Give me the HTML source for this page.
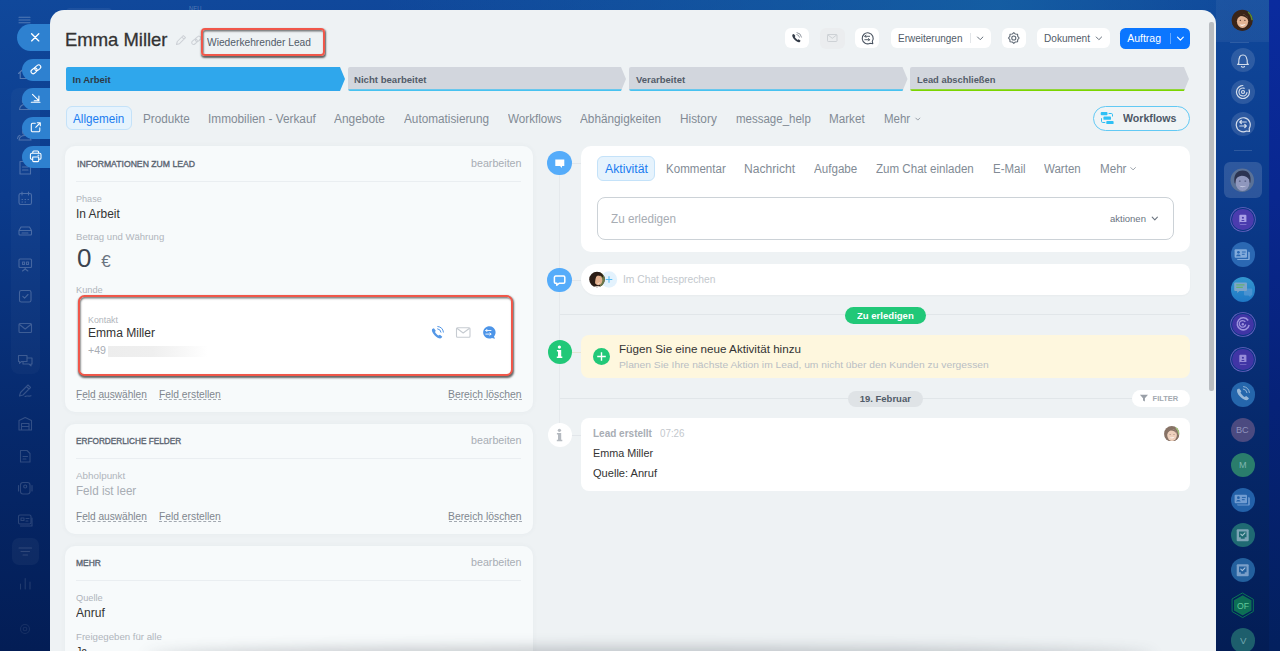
<!DOCTYPE html>
<html lang="de"><head><meta charset="utf-8"><title>Lead - Emma Miller</title>
<style>
*{box-sizing:border-box;margin:0;padding:0}
html,body{width:1280px;height:651px;overflow:hidden}
body{position:relative;font-family:"Liberation Sans",sans-serif;background:linear-gradient(180deg,#10489b 0%,#0b3b8c 30%,#06296c 65%,#031d55 100%)}
.abs,.t,svg.i{position:absolute}
.t{white-space:pre;line-height:1;transform-origin:0 50%}
.topband{left:0;top:0;width:1280px;height:40px;background:linear-gradient(90deg,rgba(20,96,165,0) 0%,rgba(20,96,165,0) 30%,rgba(22,100,165,.75) 78%,rgba(20,96,165,.1) 96%)}
.rstrip{left:1269px;top:0;width:11px;height:651px;background:linear-gradient(180deg,#0a2b9e 0%,#09278f 30%,#062278 62%,#03205e 100%)}
.rhead{left:1216px;top:0;width:53px;height:42px;background:rgba(255,255,255,.05)}
.panel{left:50px;top:10px;width:1166px;height:700px;background:#eef2f4;border-radius:14px 14px 0 0}
.scroll{left:1209px;top:22px;width:4.5px;height:369px;background:#b9bdc1;border-radius:2px}
.pill{background:#2e81d0;border-radius:12px 0 0 12px}
.card{background:#f7fafb;border-radius:10px;box-shadow:0 0 5px rgba(80,95,110,.055)}
.wcard{background:#fff;border-radius:10px}
.hr{height:1px;background:#eaeef1}
.btn{background:#fff;border-radius:6px;top:28px;height:20px}
.circ{border-radius:50%}
.dash{border-bottom:1px dashed #a3a9b1;height:1px}
.pc{left:1232px;width:21.500px;height:21.500px;background:#4a3cae;box-shadow:0 0 0 .9px #0b3585,0 0 0 1.700px #6c65c4}
.rc{border-radius:50%;background:rgba(255,255,255,.13);width:24px;height:24px;left:1231px}
</style></head><body>
<div class="abs topband"></div>
<div class="abs rstrip"></div>
<div class="abs rhead"></div>
<div class="abs" style="left:66px;top:7.500px;width:46px;height:10px;border-radius:4px;background:rgba(255,255,255,.06)"></div>
<!-- left sidebar -->
<div class="abs" style="left:11px;top:88px;width:29px;height:286px;border-radius:8px;background:rgba(255,255,255,.028)"></div>
<div class="abs" style="left:12px;top:538px;width:27px;height:27px;border-radius:7px;background:rgba(255,255,255,.042)"></div>
<svg class="i" style="left:0;top:0" width="50" height="651" viewBox="0 0 50 651" fill="none" stroke="#fff" stroke-width="1.1" stroke-linecap="round" stroke-linejoin="round">
 <g opacity=".28"><path d="M19 17.2h11M19 20h11M19 22.700h11"/></g>
 <g opacity=".3"><path d="M18.500 73.500l6-5.500 6 5.500M20.200 72.500v6h8.600v-6"/></g>
 <g opacity=".26"><circle cx="25" cy="101" r="2.6"/><path d="M19.5 109.5c.5-3.5 2.5-5 5.500-5s5 1.500 5.500 5z"/></g>
 <g opacity=".26"><circle cx="25" cy="132" r="2.400"/><path d="M19 140c.5-3.200 2.500-4.500 6-4.500s5.500 1.300 6 4.500zM17.500 138.500c.2-1.800 1-2.800 2.500-3.200M32.500 138.500c-.2-1.800-1-2.800-2.500-3.200"/></g>
 <g opacity=".25"><path d="M20 161.500h7.500l3 3v9.500h-10.500zM22.500 167h5.500M22.500 170h5.500"/></g>
 <g opacity=".24"><rect x="19" y="193.500" width="12.500" height="11" rx="1.800"/><path d="M22 192v3M28.500 192v3M22 199.500h.5M25 199.500h.5M28 199.500h.5M22 202h.5M25 202h.5"/></g>
 <g opacity=".24"><path d="M19 230.500l2-3.500h8.500l2 3.500v3.500a1 1 0 0 1-1 1h-10.500a1 1 0 0 1-1-1zM19 230.500h12.500M22 233h6"/></g>
 <g opacity=".22"><rect x="19" y="259" width="12.500" height="8.500" rx="1"/><path d="M22.500 262h2v2.500h-2zM26.500 262h2v2.500h-2zM25.200 267.500v1.500M22.500 271l2.700-2 2.700 2"/></g>
 <g opacity=".22"><rect x="19.500" y="290.500" width="11.500" height="11.500" rx="1.800"/><path d="M22.800 296.300l1.800 1.800 3.400-3.600"/></g>
 <g opacity=".2"><rect x="19" y="323.500" width="12.500" height="9" rx="1"/><path d="M19.500 324.500l5.700 4.500 5.700-4.500"/></g>
 <g opacity=".2"><path d="M18.500 355.500h8.500v6h-5.500l-2 1.800v-1.800h-1zM23 361.500v2.500h6l2 1.800v-1.800h1v-6h-5"/></g>
 <g opacity=".19"><path d="M19.500 396l1-3.500 7.500-7.500 2.500 2.500-7.500 7.500zM26.500 386.500l2.500 2.500M25 396.500c2-1.500 3.500.5 6-.8"/></g>
 <g opacity=".18"><path d="M19 420.500l6.200-3 6.300 3v9.500h-12.500zM21.500 430v-6.500h7.500v6.500M21.500 426.500h7.500"/></g>
 <g opacity=".17"><path d="M20.500 450.500h6.500l3 3v8.500h-9.500zM23 456.500h4.500M23 459h3"/></g>
 <g opacity=".16"><rect x="20.500" y="482.500" width="9.500" height="11.500" rx="2.500"/><circle cx="25.200" cy="486.500" r="1.500"/><path d="M18.500 485.500v5.500M32 485.500v5.500"/></g>
 <g opacity=".15"><rect x="18.500" y="515" width="12.500" height="9" rx="1.500"/><path d="M21 518h3v2.500h-3zM26 518.500h3M26 521h2M20.500 526h11.500v-8"/></g>
 <g opacity=".14"><path d="M19 548h12.500M21 551.500h8.500M23 555h4.500"/></g>
 <g opacity=".12"><path d="M20.500 589v-5M25.200 589v-10.500M30 589v-7"/></g>
 <g opacity=".08"><circle cx="25" cy="629" r="4.500"/><circle cx="25" cy="629" r="1.800"/></g>
</svg>
<div class="abs pill" style="left:17px;top:24px;width:60px;height:27px;border-radius:13.500px 0 0 13.500px"></div>
<div class="abs pill" style="left:22px;top:59px;width:60px;height:21.500px"></div>
<div class="abs pill" style="left:22px;top:88px;width:60px;height:21.500px"></div>
<div class="abs pill" style="left:22px;top:117px;width:60px;height:21.500px"></div>
<div class="abs pill" style="left:22px;top:146px;width:60px;height:21.500px"></div>
<svg class="i" style="left:0;top:0" width="60" height="180" viewBox="0 0 60 180" fill="none" stroke="#fff" stroke-width="1.080" stroke-linecap="round" stroke-linejoin="round">
 <path d="M31.600 33.700l7.200 7.200M38.800 33.700l-7.200 7.200" stroke-width="1.350"/>
 <g transform="translate(35.900 69.300) rotate(-40)"><rect x="-5.700" y="-2.100" width="6.600" height="4.200" rx="2.100"/><rect x="-0.900" y="-2.100" width="6.600" height="4.200" rx="2.100"/></g>
 <path d="M32.500 94.300l6.300 6.300M38.900 96v4.700h-4.700M31.300 102.300h8.700"/>
 <path d="M39.800 127.800v2.600a1.400 1.400 0 0 1-1.400 1.400h-5.700a1.400 1.400 0 0 1-1.400-1.400v-5.700a1.400 1.400 0 0 1 1.400-1.400h2.600M37.300 122.700h3v3M40 123l-4.300 4.300"/>
 <path d="M32.800 153.300v-1.300a1 1 0 0 1 1-1h3.800a1 1 0 0 1 1 1v1.300M32.600 159.300h-.9a1.300 1.300 0 0 1-1.300-1.300v-3.300a1.400 1.400 0 0 1 1.400-1.400h7.800a1.400 1.400 0 0 1 1.400 1.400v3.300a1.300 1.300 0 0 1-1.300 1.300h-.9M32.700 157h6v3.700a.9.900 0 0 1-.9.900h-4.200a.9.900 0 0 1-.9-.9zM38 155.300h.8"/>
</svg>

<!-- right sidebar -->
<div class="abs" style="left:1230px;top:42px;width:19px;height:1px;background:rgba(255,255,255,.13)"></div>
<div class="abs" style="left:1234px;top:150px;width:18px;height:1px;background:rgba(255,255,255,.14)"></div>
<!-- user avatar -->
<svg class="i" style="left:1231.200px;top:9.300px" width="22.500" height="22.500" viewBox="0 0 24 24">
 <defs><clipPath id="av1"><circle cx="12" cy="12" r="11.300"/></clipPath></defs>
 <g clip-path="url(#av1)"><rect width="24" height="24" fill="#3a2418"/><rect x="18" y="0" width="6" height="12" fill="#5d8a2e"/><path d="M2 24c-2-14 1-22 10-22 8 0 11 6 10 22z" fill="#3a2418"/><ellipse cx="12.300" cy="13" rx="6" ry="7.300" fill="#e3b494"/><path d="M5.800 12c.5-5 4-7 7-6.500 3 .3 5 2.500 5.700 6-2-2.500-5-4-8-4-2.200.8-3.700 2.500-4.700 4.500z" fill="#3a2418"/><path d="M9 16.300c1.800 2.200 5 2.200 6.600-.2-2 .9-4.600 1-6.600.2z" fill="#fff"/><ellipse cx="10" cy="12" rx=".8" ry=".6" fill="#4a2e22"/><ellipse cx="14.800" cy="12" rx=".8" ry=".6" fill="#4a2e22"/></g>
</svg>
<div class="abs rc" style="top:48px"></div>
<div class="abs rc" style="top:80px"></div>
<div class="abs rc" style="top:112px"></div>
<svg class="i" style="left:1216px;top:40px" width="54" height="100" viewBox="0 0 54 100" fill="none" stroke="#fff" stroke-width="1.200" stroke-linecap="round" stroke-linejoin="round" opacity=".8">
 <path d="M22.700 23.500c0-7 1.500-8.500 4.300-8.500s4.300 1.500 4.300 8.500l1 1h-10.600zM25.500 26.500c.5 1 2.500 1 3 0"/>
 <circle cx="27" cy="52" r="6.500" stroke-dasharray="32 9" transform="rotate(-20 27 52)"/><circle cx="27" cy="52" r="4" stroke-dasharray="19 7" transform="rotate(10 27 52)"/><circle cx="27" cy="52" r="1.500"/>
 <path d="M33.200 88.500a7 7 0 1 0-2.700 2.500l3 .5zM30.300 82h-6.500M25.300 80.500l-1.500 1.500 1.500 1.500M23.800 86h6.500M28.800 84.500l1.500 1.500-1.500 1.500"/>
</svg>
<!-- selected avatar -->
<div class="abs" style="left:1223.800px;top:162px;width:38px;height:35.500px;border-radius:6px;background:rgba(255,255,255,.14)"></div>
<svg class="i" style="left:1230.300px;top:167.600px" width="24.500" height="24.500" viewBox="0 0 24 24">
 <defs><clipPath id="av2"><circle cx="12" cy="12" r="11.500"/></clipPath></defs>
 <g clip-path="url(#av2)"><rect width="24" height="24" fill="#5b7297"/><path d="M4.500 15c-1.500-8 2-12.500 8-12.500 5.500 0 8.500 4.500 7.500 12z" fill="#2c3452"/><ellipse cx="12.300" cy="14" rx="6.800" ry="8.600" fill="#8f97bd"/><path d="M5.500 11.500c.3-5 3.500-7 7-6.800 3.500.2 6 2.500 6.500 6.800-1.800-2.600-4.300-3.800-7.500-3.800-2.800.3-4.800 1.500-6 3.800z" fill="#2c3452"/><path d="M9 17.500c1.800 1.800 5 1.800 6.600-.1-2 .7-4.600.8-6.600.1z" fill="#c9cfe6"/><ellipse cx="9.600" cy="12.800" rx="1" ry=".6" fill="#4a5278"/><ellipse cx="15" cy="12.800" rx="1" ry=".6" fill="#4a5278"/></g>
</svg>
<!-- app circles -->
<div class="abs circ pc" style="top:208.700px"></div>
<div class="abs circ" style="left:1230.500px;top:242.200px;width:24.500px;height:24.500px;background:#2b68b3"></div>
<div class="abs circ" style="left:1230.500px;top:277.400px;width:24.500px;height:24.500px;background:linear-gradient(180deg,#3397cf,#1f78c6)"></div>
<div class="abs circ pc" style="top:313.600px;background:#4035a5"></div>
<div class="abs circ pc" style="top:348.600px;background:#4035a5"></div>
<div class="abs circ" style="left:1230.500px;top:382.200px;width:24.500px;height:24.500px;background:#2566ac"></div>
<div class="abs circ" style="left:1230.500px;top:417.800px;width:24.500px;height:24.500px;background:#4b4a80"></div>
<div class="abs circ" style="left:1230.500px;top:452.700px;width:24.500px;height:24.500px;background:#2a7d6c"></div>
<div class="abs circ" style="left:1230.500px;top:487.700px;width:24.500px;height:24.500px;background:#2361a9"></div>
<div class="abs circ" style="left:1230.500px;top:522.600px;width:24.500px;height:24.500px;background:#1f6a73"></div>
<div class="abs circ" style="left:1230.500px;top:557.600px;width:24.500px;height:24.500px;background:#23609e"></div>
<div class="abs circ" style="left:1230.500px;top:628.300px;width:24.500px;height:24.500px;background:#1d5e6c"></div>
<svg class="i" style="left:1216px;top:200px;opacity:.88" width="54" height="451" viewBox="0 0 54 451" fill="none" stroke-linecap="round" stroke-linejoin="round">
 <!-- purple contact book -->
 <g fill="#b7aeee"><path d="M23.300 15.800a1 1 0 0 1 1-1h5.100a1 1 0 0 1 1 1v6.200h-6.100a1 1 0 0 0 0 2h6.100v.500h-6.100a1.500 1.500 0 0 1-1-1.500z"/></g><circle cx="26.900" cy="17.700" r="1.050" fill="#4a3cae"/><path d="M25.100 21c.3-1.500 3.300-1.500 3.600 0z" fill="#4a3cae"/>
 <!-- contacts card -->
 <g fill="#8fb5e2"><rect x="18.600" y="49.300" width="12.400" height="8.500" rx="1"/><path d="M32.200 51.800h.6a1 1 0 0 1 1 1v6.200a1 1 0 0 1-1 1h-10.800a1 1 0 0 1-1-1h11.200z"/></g><circle cx="22.400" cy="52.300" r="1.400" fill="#2b68b3"/><path d="M20.100 56.200c.3-2.200 4.300-2.200 4.600 0z" fill="#2b68b3"/><path d="M26.300 52h3M26.300 54.300h2" stroke="#2b68b3" stroke-width="1"/>
 <!-- chat -->
 <path d="M28 88.500h7.300a1 1 0 0 1 1 1v5a1 1 0 0 1-1 1h-.800v1.700l-2-1.700h-3.500a1 1 0 0 1-1-1z" fill="#4f95d3"/>
 <path d="M18.200 83.400a1 1 0 0 1 1-1h10.800a1 1 0 0 1 1 1v6.600a1 1 0 0 1-1 1h-6.500l-2.300 2v-2h-2a1 1 0 0 1-1-1z" fill="#88a9c9"/>
 <path d="M20.300 84.800h8.200M20.300 87.300h6.500" stroke="#6cb56a" stroke-width="1.200" stroke-linecap="butt"/>
 <!-- purple copilot -->
 <g stroke="#a9a0e6" stroke-width="1.500" stroke-linecap="butt"><path d="M32.200 120.500a6 6 0 1 0 .9 4.500"/><path d="M29.300 122a3.300 3.300 0 1 0 .5 2.500" stroke-width="1.300"/></g><circle cx="26.800" cy="124.200" r="1.200" fill="#a9a0e6"/>
 <!-- purple contact book 2 -->
 <g fill="#a399e0"><path d="M23.300 155.800a1 1 0 0 1 1-1h5.100a1 1 0 0 1 1 1v6.200h-6.100a1 1 0 0 0 0 2h6.100v.500h-6.100a1.500 1.500 0 0 1-1-1.500z"/></g><circle cx="26.900" cy="157.700" r="1.050" fill="#4035a5"/><path d="M25.100 161c.3-1.500 3.300-1.500 3.600 0z" fill="#4035a5"/>
 <!-- phone -->
 <path d="M21.300 189.200c-1 1.500.1 4.700 3 7.600s6.100 4 7.600 3l1.100-1.600-2.800-2.200-1.600.9c-1.300-.6-3.500-2.800-4.100-4.100l.9-1.600-2.200-2.800z" fill="#a8c3df"/>
 <path d="M27.300 189a4.300 4.300 0 0 1 3.700 3.700M27.500 186.600a6.800 6.800 0 0 1 5.900 5.900" stroke="#a8c3df" stroke-width="1"/>
 <!-- contacts card 2 -->
 <g fill="#7da6d8"><rect x="18.600" y="294.700" width="12.400" height="8.500" rx="1"/><path d="M32.200 297.200h.6a1 1 0 0 1 1 1v6.200a1 1 0 0 1-1 1h-10.800a1 1 0 0 1-1-1h11.200z"/></g><circle cx="22.400" cy="297.700" r="1.400" fill="#2361a9"/><path d="M20.100 301.600c.3-2.200 4.300-2.200 4.600 0z" fill="#2361a9"/><path d="M26.300 297.400h3M26.300 299.700h2" stroke="#2361a9" stroke-width="1"/>
 <!-- check boxes -->
 <path d="M20.700 330.200a1 1 0 0 1 1-1h10a1 1 0 0 1 1 1v10a1 1 0 0 1-1 1h-10a1 1 0 0 1-1-1z" fill="#8aaec0"/><path d="M23 331.500h7.500v5.700h-1.800v1.600h-3.900v-1.600h-1.800z" fill="#1f6a73"/><path d="M24.800 334.200l1.500 1.500 2.700-2.900" stroke="#b9d3dc" stroke-width="1.100"/>
 <path d="M20.700 365.200a1 1 0 0 1 1-1h10a1 1 0 0 1 1 1v10a1 1 0 0 1-1 1h-10a1 1 0 0 1-1-1z" fill="#86a8cf"/><path d="M23 366.500h7.500v5.700h-1.800v1.600h-3.900v-1.600h-1.800z" fill="#23609e"/><path d="M24.800 369.200l1.500 1.500 2.700-2.900" stroke="#b9cfe6" stroke-width="1.100"/>
 <!-- hex OF -->
 <path d="M26.700 393.200l10.600 6.100v12.200l-10.600 6.100-10.600-6.100v-12.200z" fill="none" stroke="#0c8356" stroke-width="1"/>
 <path d="M26.700 395.300l8.800 5.050v10.100l-8.800 5.050-8.800-5.050v-10.100z" fill="#0f7b55"/>
</svg>

<div class="abs panel"></div>
<div class="abs scroll"></div>
<!-- header -->
<svg class="i" style="left:174px;top:33px" width="30" height="14" viewBox="0 0 30 14" fill="none" stroke="#cdd1d6" stroke-width="1.050" stroke-linecap="round" stroke-linejoin="round">
 <path d="M2.500 11.500l.8-3 6-6 2.200 2.200-6 6zM7.800 4l2.200 2.200"/>
 <g transform="translate(22.300 7.300) rotate(-40)"><rect x="-5.400" y="-1.900" width="6.200" height="3.800" rx="1.900"/><rect x="-0.800" y="-1.900" width="6.200" height="3.800" rx="1.900"/></g>
</svg>
<div class="abs" style="left:201.300px;top:28px;width:123.700px;height:27.700px;border:2.800px solid #f0574a;border-radius:4px;box-shadow:.8px 1.600px 1.800px rgba(0,0,0,.6),inset .8px 1.500px 1.600px rgba(0,0,0,.5)"></div>
<!-- stages -->
<svg class="i" style="left:60px;top:66px" width="1140" height="27" viewBox="60 66 1140 27">
 <path d="M68 67h272l5 12-5 12h-272a2 2 0 0 1-2-2v-20a2 2 0 0 1 2-2z" fill="#2fa7ec"/>
 <path d="M350 67h271l5 12-5 12h-271a2 2 0 0 1-2-2v-20a2 2 0 0 1 2-2z" fill="#d2d6dd"/>
 <path d="M348.300 89.200h273.400l-.8 1.800h-270.900a2 2 0 0 1-1.700-1.800z" fill="#47c2f0"/>
 <path d="M631 67h271.500l5 12-5 12h-271.500a2 2 0 0 1-2-2v-20a2 2 0 0 1 2-2z" fill="#d2d6dd"/>
 <path d="M629.300 89.200h273.900l-.8 1.800h-271.400a2 2 0 0 1-1.700-1.800z" fill="#47c2f0"/>
 <path d="M912 67h272l5 12-5 12h-272a2 2 0 0 1-2-2v-20a2 2 0 0 1 2-2z" fill="#d2d6dd"/>
 <path d="M910.300 89.200h274.400l-.8 1.800h-271.900a2 2 0 0 1-1.700-1.800z" fill="#7bd500"/>
</svg>
<!-- top buttons -->
<div class="abs btn" style="left:785px;width:24px"></div>
<div class="abs btn" style="left:819.500px;width:25.500px;background:#ebedef;top:27.500px;height:21px;border-radius:6px"></div>
<div class="abs btn" style="left:855px;width:24px"></div>
<div class="abs btn" style="left:890.500px;width:100px"></div>
<div class="abs" style="left:969.500px;top:33px;width:1px;height:10px;background:#e3e6e9"></div>
<div class="abs btn" style="left:1002px;width:23.500px"></div>
<div class="abs btn" style="left:1037px;width:72.500px"></div>
<div class="abs btn" style="left:1120px;width:70px;top:27.500px;height:21.500px;background:#0b76ff;border-radius:5.500px"></div>
<div class="abs" style="left:1169.500px;top:33px;width:1px;height:10.500px;background:rgba(255,255,255,.35)"></div>
<svg class="i" style="left:780px;top:24px" width="420" height="28" viewBox="780 24 420 28" fill="none" stroke-linecap="round" stroke-linejoin="round">
 <!-- phone -->
 <g transform="translate(-.8 .3)"><path d="M793.300 34.300c-.7 1 .1 3.200 2.100 5.200s4.200 2.800 5.200 2.100l.8-1.100-1.900-1.500-1.100.6c-.9-.4-2.400-1.900-2.800-2.800l.6-1.100-1.500-1.900z" fill="#333b47"/>
 <path d="M797.600 34.200a3.200 3.200 0 0 1 2.700 2.700M797.800 32.300a5.200 5.200 0 0 1 4.500 4.500" stroke="#7a828c" stroke-width=".8"/></g>
 <!-- mail -->
 <rect x="827.500" y="34.500" width="9.500" height="7" rx=".8" stroke="#cdd1d5" stroke-width="1"/><path d="M828 35l4.300 3.300 4.300-3.300" stroke="#cdd1d5" stroke-width="1"/>
 <!-- chat -->
 <path d="M872.300 41.300a5.500 5.500 0 1 0-2.100 1.900l2.600.5z" stroke="#4a5461" stroke-width="1.100"/>
 <path d="M869.600 36.300h-4.800M866 35.100l-1.200 1.200 1.200 1.200M864.800 39.700h4.800M868.400 38.500l1.200 1.200-1.200 1.200" stroke="#4a5461" stroke-width=".95"/>
 <!-- chevrons -->
 <path d="M977.500 37l2.700 2.700 2.700-2.700" stroke="#66707c" stroke-width="1"/>
 <path d="M1096.200 37l2.700 2.700 2.700-2.700" stroke="#66707c" stroke-width="1"/>
 <path d="M1177.500 37.200l2.900 2.900 2.900-2.900" stroke="#fff" stroke-width="1.200"/>
 <!-- gear -->
 <g stroke="#5e6874" stroke-width="1.080" stroke-linejoin="round"><circle cx="1013.8" cy="38" r="2.050"/><path d="M1013.80 32.65L1015.43 34.07L1017.58 34.22L1017.73 36.37L1019.15 38.00L1017.73 39.63L1017.58 41.78L1015.43 41.93L1013.80 43.35L1012.17 41.93L1010.02 41.78L1009.87 39.63L1008.45 38.00L1009.87 36.37L1010.02 34.22L1012.17 34.07z"/></g>
</svg>
<!-- tabs -->
<div class="abs" style="left:65.500px;top:106px;width:66px;height:24px;border-radius:6px;background:#e6f3fd;border:1px solid #c4e2f9"></div>
<svg class="i" style="left:914px;top:115px" width="8" height="8" viewBox="0 0 8 8" fill="none" stroke="#9aa1a9" stroke-width="1"><path d="M1.500 2.800l2.300 2.300 2.300-2.300"/></svg>
<!-- workflows button -->
<div class="abs" style="left:1093px;top:106px;width:97px;height:24.500px;border-radius:12.500px;border:1px solid #62c9f4;background:#f0f4f6"></div>
<svg class="i" style="left:1098px;top:109px" width="20" height="18" viewBox="1098 109 20 18">
 <rect x="1100.700" y="112.100" width="6.800" height="3.100" rx=".9" fill="#2fc0f5"/><rect x="1103.400" y="116.600" width="7.600" height="3.200" rx=".9" fill="#2fc0f5"/><rect x="1106.300" y="120.900" width="7.300" height="3.200" rx=".9" fill="#2fc0f5"/>
 <path d="M1109 113.500h2.300a1.200 1.200 0 0 1 1.200 1.200v1.400M1101.500 118.600v2.700a1.200 1.200 0 0 0 1.200 1.200h2.200" fill="none" stroke="#2fc0f5" stroke-width="1" stroke-linecap="round"/>
</svg>

<!-- left column cards -->
<div class="abs card" style="left:65px;top:146px;width:468px;height:266px"></div>
<div class="abs card" style="left:65px;top:424px;width:468px;height:110px"></div>
<div class="abs card" style="left:65px;top:545.500px;width:468px;height:140px"></div>
<div class="abs hr" style="left:76px;top:180.500px;width:445px"></div>
<div class="abs hr" style="left:76px;top:457.500px;width:445px"></div>
<div class="abs hr" style="left:76px;top:579.500px;width:445px"></div>
<!-- contact red box -->
<div class="abs" style="left:77.500px;top:295px;width:435px;height:81px;background:#fff;border:2.800px solid #f0574a;border-radius:6.500px;box-shadow:.6px 1.800px 2px rgba(0,0,0,.6),inset .8px 1.500px 1.800px rgba(0,0,0,.5)"></div>
<div class="abs" style="left:108px;top:345.500px;width:100px;height:11.500px;background:linear-gradient(90deg,#ededed 0%,#efefef 45%,rgba(242,242,242,.6) 75%,rgba(255,255,255,0) 100%)"></div>
<svg class="i" style="left:428px;top:322px" width="72" height="20" viewBox="428 322 72 20" fill="none" stroke-linecap="round" stroke-linejoin="round">
 <path d="M432.200 329c-.9 1.300.1 4 2.600 6.500s5.200 3.500 6.500 2.600l1-1.400-2.400-1.900-1.400.8c-1.100-.5-3-2.400-3.500-3.500l.8-1.400-1.900-2.400z" fill="#5497e6"/>
 <path d="M437.600 328.800a4 4 0 0 1 3.400 3.400M437.800 326.500a6.300 6.300 0 0 1 5.600 5.600" stroke="#5497e6" stroke-width="1"/>
 <rect x="456.500" y="327.800" width="13.500" height="9.400" rx="1" stroke="#c6cbd1" stroke-width="1.100"/><path d="M457.200 328.500l6 4.500 6-4.500" stroke="#c6cbd1" stroke-width="1.100"/>
 <path d="M494 336.500a6.200 6.200 0 1 0-2 1.500l3 .8z" fill="#4d95e8"/>
 <path d="M491 330.500h-5.200M487 329.300l-1.200 1.200 1.200 1.200M485.800 334.100h5.200M489.800 332.900l1.200 1.200-1.200 1.200" stroke="#fff" stroke-width=".9"/>
</svg>
<!-- dashed underlines -->
<div class="abs dash" style="left:76.500px;top:399px;width:70.500px"></div>
<div class="abs dash" style="left:158.500px;top:399px;width:62px"></div>
<div class="abs dash" style="left:448.500px;top:399px;width:73.500px"></div>
<div class="abs dash" style="left:76.500px;top:521px;width:70.500px"></div>
<div class="abs dash" style="left:158.500px;top:521px;width:62px"></div>
<div class="abs dash" style="left:448.500px;top:521px;width:73.500px"></div>

<!-- timeline -->
<div class="abs" style="left:559px;top:170px;width:1px;height:256px;background:#e5e9ec"></div>
<div class="abs" style="left:571px;top:162.500px;width:10px;height:1px;background:#e2e6ea"></div>
<div class="abs" style="left:571px;top:279.500px;width:10px;height:1px;background:#e2e6ea"></div>
<div class="abs" style="left:571px;top:351.500px;width:10px;height:1px;background:#e6e3d3"></div>
<div class="abs" style="left:571px;top:434.500px;width:10px;height:1px;background:#e2e6ea"></div>
<div class="abs" style="left:560px;top:314px;width:630px;height:1px;background:#e1e6e9"></div>
<div class="abs" style="left:560px;top:398px;width:630px;height:1px;background:#e1e6e9"></div>
<!-- cards -->
<div class="abs wcard" style="left:581px;top:146px;width:609px;height:106px"></div>
<div class="abs" style="left:597px;top:156px;width:58px;height:24.500px;border-radius:6px;background:#e6f3fd;border:1px solid #c4e2f9"></div>
<div class="abs" style="left:597px;top:197px;width:577px;height:42.500px;border-radius:8px;border:1px solid #ccd2d7;background:#fff"></div>
<svg class="i" style="left:1128px;top:165px" width="34" height="60" viewBox="1128 165 34 60" fill="none" stroke-linecap="round" stroke-linejoin="round"><path d="M1130.800 167.600l2.300 2.300 2.300-2.300" stroke="#9aa1a9" stroke-width="1"/><path d="M1152.200 217.200l2.600 2.600 2.600-2.600" stroke="#6a737f" stroke-width="1.100"/></svg>
<div class="abs" style="left:581px;top:264px;width:609px;height:31px;border-radius:15.500px 8px 8px 15.500px;background:#fff;box-shadow:0 1px 2px rgba(0,0,0,.03)"></div>
<div class="abs" style="left:581px;top:335px;width:609px;height:43px;border-radius:8px;background:#fef7de"></div>
<div class="abs wcard" style="left:581px;top:418px;width:609px;height:72.500px;border-radius:8px"></div>
<!-- pills -->
<div class="abs" style="left:845px;top:307px;width:80.500px;height:16.500px;border-radius:8.500px;background:#21c878"></div>
<div class="abs" style="left:848px;top:390.500px;width:74.500px;height:16px;border-radius:8px;background:#dfe3e6"></div>
<div class="abs" style="left:1132px;top:390px;width:58px;height:16.500px;border-radius:8.500px;background:#fff"></div>
<svg class="i" style="left:1139px;top:394px" width="10" height="9" viewBox="0 0 10 9"><path d="M.9.800h8.100l-3.100 3.400v3.300l-1.900-.9v-2.400z" fill="#9aa0a8"/></svg>
<!-- circles -->
<div class="abs circ" style="left:547.400px;top:151px;width:24.300px;height:24.300px;background:#55acfa"></div>
<div class="abs circ" style="left:547.400px;top:267.800px;width:24.300px;height:24.300px;background:#55acfa"></div>
<div class="abs circ" style="left:547.500px;top:339.500px;width:24.500px;height:24.500px;background:#21c878"></div>
<div class="abs circ" style="left:547.500px;top:422.500px;width:24.500px;height:24.500px;background:#fff"></div>
<svg class="i" style="left:547px;top:150px" width="26" height="300" viewBox="547 150 26 300" fill="none" stroke-linecap="round" stroke-linejoin="round">
 <path d="M555.300 159.500h9v6.500h-2.300v1.900l-2-1.900h-4.700z" fill="#fff"/>
 <g fill="#fff"><circle cx="559.400" cy="347.100" r="1.650"/><path d="M556.900 349.900h4.300v6.700h1.100v1.500h-5.500v-1.500h1.200v-5.200h-1.100z"/></g>
 <g fill="#b5bac0" transform="translate(0 83.200)"><circle cx="559.400" cy="347.100" r="1.650"/><path d="M556.900 349.900h4.300v6.700h1.100v1.500h-5.500v-1.500h1.200v-5.200h-1.100z"/></g>
 <path d="M554.400 277.300a1.200 1.200 0 0 1 1.200-1.200h8a1.200 1.200 0 0 1 1.200 1.200v4.800a1.200 1.200 0 0 1-1.200 1.200h-4.500l-2.300 2v-2h-1.200a1.200 1.200 0 0 1-1.200-1.200z" stroke="#fff" stroke-width="1.500"/>
</svg>
<!-- chat row avatar -->
<svg class="i" style="left:589px;top:271px" width="30" height="17" viewBox="0 0 30 17">
 <circle cx="20" cy="8.500" r="8.200" fill="#e3f2fd"/><path d="M20 5.200v6.600M16.700 8.500h6.600" stroke="#55bdf5" stroke-width="1.100" fill="none"/>
 <defs><clipPath id="av3"><circle cx="8" cy="8.500" r="7.800"/></clipPath></defs>
 <g clip-path="url(#av3)"><rect width="17" height="17" fill="#2b1d16"/><rect x="11" y="0" width="6" height="17" fill="#6b7a4a"/><ellipse cx="9.300" cy="9.300" rx="4" ry="4.900" fill="#e2b08f"/><path d="M3 13c-1-7 1.500-11.500 6-11.500 3.500 0 5.500 2 5.200 5.500-1.800-2.500-4.200-3-6-2.500-1.800 1.500-2 5-2.200 9z" fill="#2b1d16"/><path d="M7.800 11.800c1 1 2.600 1 3.400-.2-1 .5-2.300.6-3.400.2z" fill="#fff"/><ellipse cx="9" cy="18.500" rx="7" ry="3.500" fill="#d9cfc8"/></g>
</svg>
<!-- green plus -->
<div class="abs circ" style="left:593px;top:348px;width:17px;height:17px;background:#21c878"></div>
<svg class="i" style="left:593px;top:348px" width="17" height="17" viewBox="0 0 17 17"><path d="M8.500 4.200v8.600M4.200 8.500h8.600" stroke="#fff" stroke-width="1.400" fill="none"/></svg>
<!-- author avatar -->
<svg class="i" style="left:1164px;top:425.600px;opacity:.72" width="15.500" height="15.500" viewBox="0 0 16 16">
 <defs><clipPath id="av4"><circle cx="8" cy="8" r="7.900"/></clipPath></defs>
 <g clip-path="url(#av4)"><rect width="16" height="16" fill="#5a3d2c"/><rect x="12" y="0" width="4" height="9" fill="#7fae4a"/><path d="M1 16c-1.500-9 1-14.500 7-14.500 5.500 0 7.500 4 7 14.500z" fill="#5a3d2c"/><ellipse cx="8.300" cy="9.300" rx="5" ry="6.200" fill="#e8bfa3"/><path d="M3 8.500c.2-4.200 2.800-5.800 5.600-5.500 2.500.2 4.200 2 4.700 5-1.600-2-3.800-3.300-6.300-3.300-1.800.7-3.100 2-4 3.800z" fill="#5a3d2c"/><path d="M5.800 11.500c1.400 1.700 3.800 1.700 5-.1-1.500.6-3.500.7-5 .1z" fill="#fff"/><ellipse cx="6.300" cy="8.700" rx=".7" ry=".5" fill="#6b4a3a"/><ellipse cx="10.300" cy="8.700" rx=".7" ry=".5" fill="#6b4a3a"/></g>
</svg>

<span class="t" style="left:65.00px;top:30.01px;font-size:19px;color:#333;transform:scaleX(0.9710);-webkit-text-stroke:.3px #333;">Emma Miller</span>
<span class="t" style="left:207.00px;top:36.85px;font-size:11px;color:#525c69;transform:scaleX(0.9293);">Wiederkehrender Lead</span>
<span class="t" style="left:189.00px;top:6.44px;font-size:6.5px;color:rgba(255,255,255,.28);transform:scaleX(0.9101);">NEU</span>
<span class="t" style="left:72.50px;top:75.38px;font-size:9.5px;color:#2c3a47;font-weight:700;">In Arbeit</span>
<span class="t" style="left:354.00px;top:75.38px;font-size:9.5px;color:#525c69;font-weight:700;transform:scaleX(1.0098);">Nicht bearbeitet</span>
<span class="t" style="left:636.00px;top:75.38px;font-size:9.5px;color:#525c69;font-weight:700;">Verarbeitet</span>
<span class="t" style="left:916.50px;top:75.38px;font-size:9.5px;color:#525c69;font-weight:700;transform:scaleX(0.9845);">Lead abschließen</span>
<span class="t" style="left:897.50px;top:32.89px;font-size:10.5px;color:#525c69;transform:scaleX(0.9525);">Erweiterungen</span>
<span class="t" style="left:1044.40px;top:32.89px;font-size:10.5px;color:#525c69;transform:scaleX(0.9611);">Dokument</span>
<span class="t" style="left:1127.20px;top:32.89px;font-size:10.5px;color:#fff;">Auftrag</span>
<span class="t" style="left:72.50px;top:112.91px;font-size:12px;color:#1a7cf0;transform:scaleX(0.9724);">Allgemein</span>
<span class="t" style="left:142.50px;top:112.91px;font-size:12px;color:#828b95;transform:scaleX(0.9733);">Produkte</span>
<span class="t" style="left:207.75px;top:112.91px;font-size:12px;color:#828b95;transform:scaleX(0.9850);">Immobilien - Verkauf</span>
<span class="t" style="left:334.00px;top:112.91px;font-size:12px;color:#828b95;transform:scaleX(0.9924);">Angebote</span>
<span class="t" style="left:403.50px;top:112.91px;font-size:12px;color:#828b95;transform:scaleX(0.9802);">Automatisierung</span>
<span class="t" style="left:507.50px;top:112.91px;font-size:12px;color:#828b95;transform:scaleX(0.9705);">Workflows</span>
<span class="t" style="left:579.90px;top:112.91px;font-size:12px;color:#828b95;transform:scaleX(0.9802);">Abhängigkeiten</span>
<span class="t" style="left:679.70px;top:112.91px;font-size:12px;color:#828b95;transform:scaleX(0.9854);">History</span>
<span class="t" style="left:735.50px;top:112.91px;font-size:12px;color:#828b95;transform:scaleX(0.9582);">message_help</span>
<span class="t" style="left:829.30px;top:112.91px;font-size:12px;color:#828b95;transform:scaleX(0.9731);">Market</span>
<span class="t" style="left:883.60px;top:112.91px;font-size:12px;color:#828b95;transform:scaleX(0.9582);">Mehr</span>
<span class="t" style="left:1122.80px;top:112.85px;font-size:11px;color:#4d5866;font-weight:700;transform:scaleX(0.9653);">Workflows</span>
<span class="t" style="left:604.50px;top:163.16px;font-size:12px;color:#1a7cf0;transform:scaleX(1.0234);">Aktivität</span>
<span class="t" style="left:666.00px;top:163.16px;font-size:12px;color:#828b95;transform:scaleX(0.9632);">Kommentar</span>
<span class="t" style="left:744.00px;top:163.16px;font-size:12px;color:#828b95;transform:scaleX(1.0062);">Nachricht</span>
<span class="t" style="left:813.75px;top:163.16px;font-size:12px;color:#828b95;transform:scaleX(0.9672);">Aufgabe</span>
<span class="t" style="left:875.75px;top:163.16px;font-size:12px;color:#828b95;transform:scaleX(0.9641);">Zum Chat einladen</span>
<span class="t" style="left:992.50px;top:163.16px;font-size:12px;color:#828b95;transform:scaleX(0.9554);">E-Mail</span>
<span class="t" style="left:1044.00px;top:163.16px;font-size:12px;color:#828b95;transform:scaleX(0.9612);">Warten</span>
<span class="t" style="left:1099.50px;top:163.16px;font-size:12px;color:#828b95;transform:scaleX(0.9691);">Mehr</span>
<span class="t" style="left:610.50px;top:212.91px;font-size:12px;color:#a8adb4;transform:scaleX(0.9742);">Zu erledigen</span>
<span class="t" style="left:1110.00px;top:214.13px;font-size:9.5px;color:#6a737f;">aktionen</span>
<span class="t" style="left:623.00px;top:273.91px;font-size:11.5px;color:#c3c8cd;transform:scaleX(0.8932);">Im Chat besprechen</span>
<span class="t" style="left:857.00px;top:311.38px;font-size:9.5px;color:#fff;font-weight:700;transform:scaleX(1.0047);">Zu erledigen</span>
<span class="t" style="left:619.00px;top:344.41px;font-size:11.5px;color:#333;transform:scaleX(1.0130);">Fügen Sie eine neue Aktivität hinzu</span>
<span class="t" style="left:619.00px;top:359.88px;font-size:9.5px;color:#b9bec4;transform:scaleX(1.0821);">Planen Sie Ihre nächste Aktion im Lead, um nicht über den Kunden zu vergessen</span>
<span class="t" style="left:859.70px;top:394.08px;font-size:9.5px;color:#525c69;font-weight:700;">19. Februar</span>
<span class="t" style="left:1152.60px;top:394.65px;font-size:7.5px;color:#a3a9b0;font-weight:700;">FILTER</span>
<span class="t" style="left:593.00px;top:429.14px;font-size:10px;color:#a8adb4;font-weight:700;">Lead erstellt</span>
<span class="t" style="left:659.50px;top:429.14px;font-size:10px;color:#c3c8cd;transform:scaleX(0.9788);">07:26</span>
<span class="t" style="left:593.00px;top:447.95px;font-size:11px;color:#333;transform:scaleX(0.9816);">Emma Miller</span>
<span class="t" style="left:593.00px;top:467.85px;font-size:11px;color:#333;transform:scaleX(1.0064);">Quelle: Anruf</span>
<span class="t" style="left:76.50px;top:159.92px;font-size:9px;color:#5a6470;transform:scaleX(0.9606);-webkit-text-stroke:.35px #5a6470;">INFORMATIONEN ZUM LEAD</span>
<span class="t" style="left:76.25px;top:436.92px;font-size:9px;color:#5a6470;transform:scaleX(0.9150);-webkit-text-stroke:.35px #5a6470;">ERFORDERLICHE FELDER</span>
<span class="t" style="left:76.25px;top:558.92px;font-size:9px;color:#5a6470;transform:scaleX(0.9434);-webkit-text-stroke:.35px #5a6470;">MEHR</span>
<span class="t" style="left:470.50px;top:158.40px;font-size:11px;color:#a8adb4;transform:scaleX(0.9712);">bearbeiten</span>
<span class="t" style="left:470.50px;top:435.40px;font-size:11px;color:#a8adb4;transform:scaleX(0.9712);">bearbeiten</span>
<span class="t" style="left:470.50px;top:557.40px;font-size:11px;color:#a8adb4;transform:scaleX(0.9712);">bearbeiten</span>
<span class="t" style="left:76.25px;top:193.68px;font-size:9.5px;color:#b0b5bb;transform:scaleX(0.9559);">Phase</span>
<span class="t" style="left:76.25px;top:207.48px;font-size:13px;color:#333;transform:scaleX(0.9171);">In Arbeit</span>
<span class="t" style="left:76.25px;top:232.38px;font-size:9.5px;color:#b0b5bb;transform:scaleX(1.0066);">Betrag und Währung</span>
<span class="t" style="left:77.00px;top:244.95px;font-size:26px;color:#3b4450;">0</span>
<span class="t" style="left:101.25px;top:252.73px;font-size:17px;color:#6a737f;">€</span>
<span class="t" style="left:76.25px;top:284.88px;font-size:9.5px;color:#b0b5bb;transform:scaleX(0.9733);">Kunde</span>
<span class="t" style="left:88.00px;top:316.36px;font-size:8.5px;color:#b0b5bb;transform:scaleX(1.0407);">Kontakt</span>
<span class="t" style="left:88.00px;top:326.92px;font-size:12.5px;color:#333;transform:scaleX(0.9647);">Emma Miller</span>
<span class="t" style="left:88.00px;top:346.14px;font-size:10px;color:#a8adb4;transform:scaleX(1.0608);">+49</span>
<span class="t" style="left:76.25px;top:388.64px;font-size:10.5px;color:#80868e;transform:scaleX(0.9620);">Feld auswählen</span>
<span class="t" style="left:158.75px;top:388.64px;font-size:10.5px;color:#80868e;transform:scaleX(0.9797);">Feld erstellen</span>
<span class="t" style="left:448.40px;top:388.64px;font-size:10.5px;color:#80868e;transform:scaleX(0.9850);">Bereich löschen</span>
<span class="t" style="left:76.25px;top:510.64px;font-size:10.5px;color:#80868e;transform:scaleX(0.9620);">Feld auswählen</span>
<span class="t" style="left:158.75px;top:510.64px;font-size:10.5px;color:#80868e;transform:scaleX(0.9797);">Feld erstellen</span>
<span class="t" style="left:448.40px;top:510.64px;font-size:10.5px;color:#80868e;transform:scaleX(0.9850);">Bereich löschen</span>
<span class="t" style="left:76.25px;top:471.13px;font-size:9.5px;color:#b0b5bb;transform:scaleX(1.0358);">Abholpunkt</span>
<span class="t" style="left:76.25px;top:485.17px;font-size:12.5px;color:#a8adb4;transform:scaleX(0.9325);">Feld ist leer</span>
<span class="t" style="left:76.25px;top:592.88px;font-size:9.5px;color:#b0b5bb;transform:scaleX(0.9738);">Quelle</span>
<span class="t" style="left:76.25px;top:606.92px;font-size:12.5px;color:#333;transform:scaleX(0.9618);">Anruf</span>
<span class="t" style="left:76.25px;top:632.13px;font-size:9.5px;color:#b0b5bb;transform:scaleX(1.0148);">Freigegeben für alle</span>
<span class="t" style="left:76.25px;top:646.42px;font-size:12.5px;color:#333;transform:scaleX(0.8521);">Ja</span>
<span class="t" style="left:1236.30px;top:425.38px;font-size:9.5px;color:#8f93bd;transform:scaleX(0.9619);">BC</span>
<span class="t" style="left:1238.80px;top:460.38px;font-size:9.5px;color:#7fb5b0;transform:scaleX(0.9594);">M</span>
<span class="t" style="left:1236.90px;top:600.98px;font-size:9.5px;color:#62c99a;transform:scaleX(0.9164);">OF</span>
<span class="t" style="left:1239.50px;top:636.38px;font-size:9.5px;color:#6fa5ad;transform:scaleX(1.0246);">V</span>
<div class="abs" style="left:150px;top:651px;width:1000px;height:10px;box-shadow:0 0 14px 4px rgba(60,70,80,.28);border-radius:50%"></div>
</body></html>
